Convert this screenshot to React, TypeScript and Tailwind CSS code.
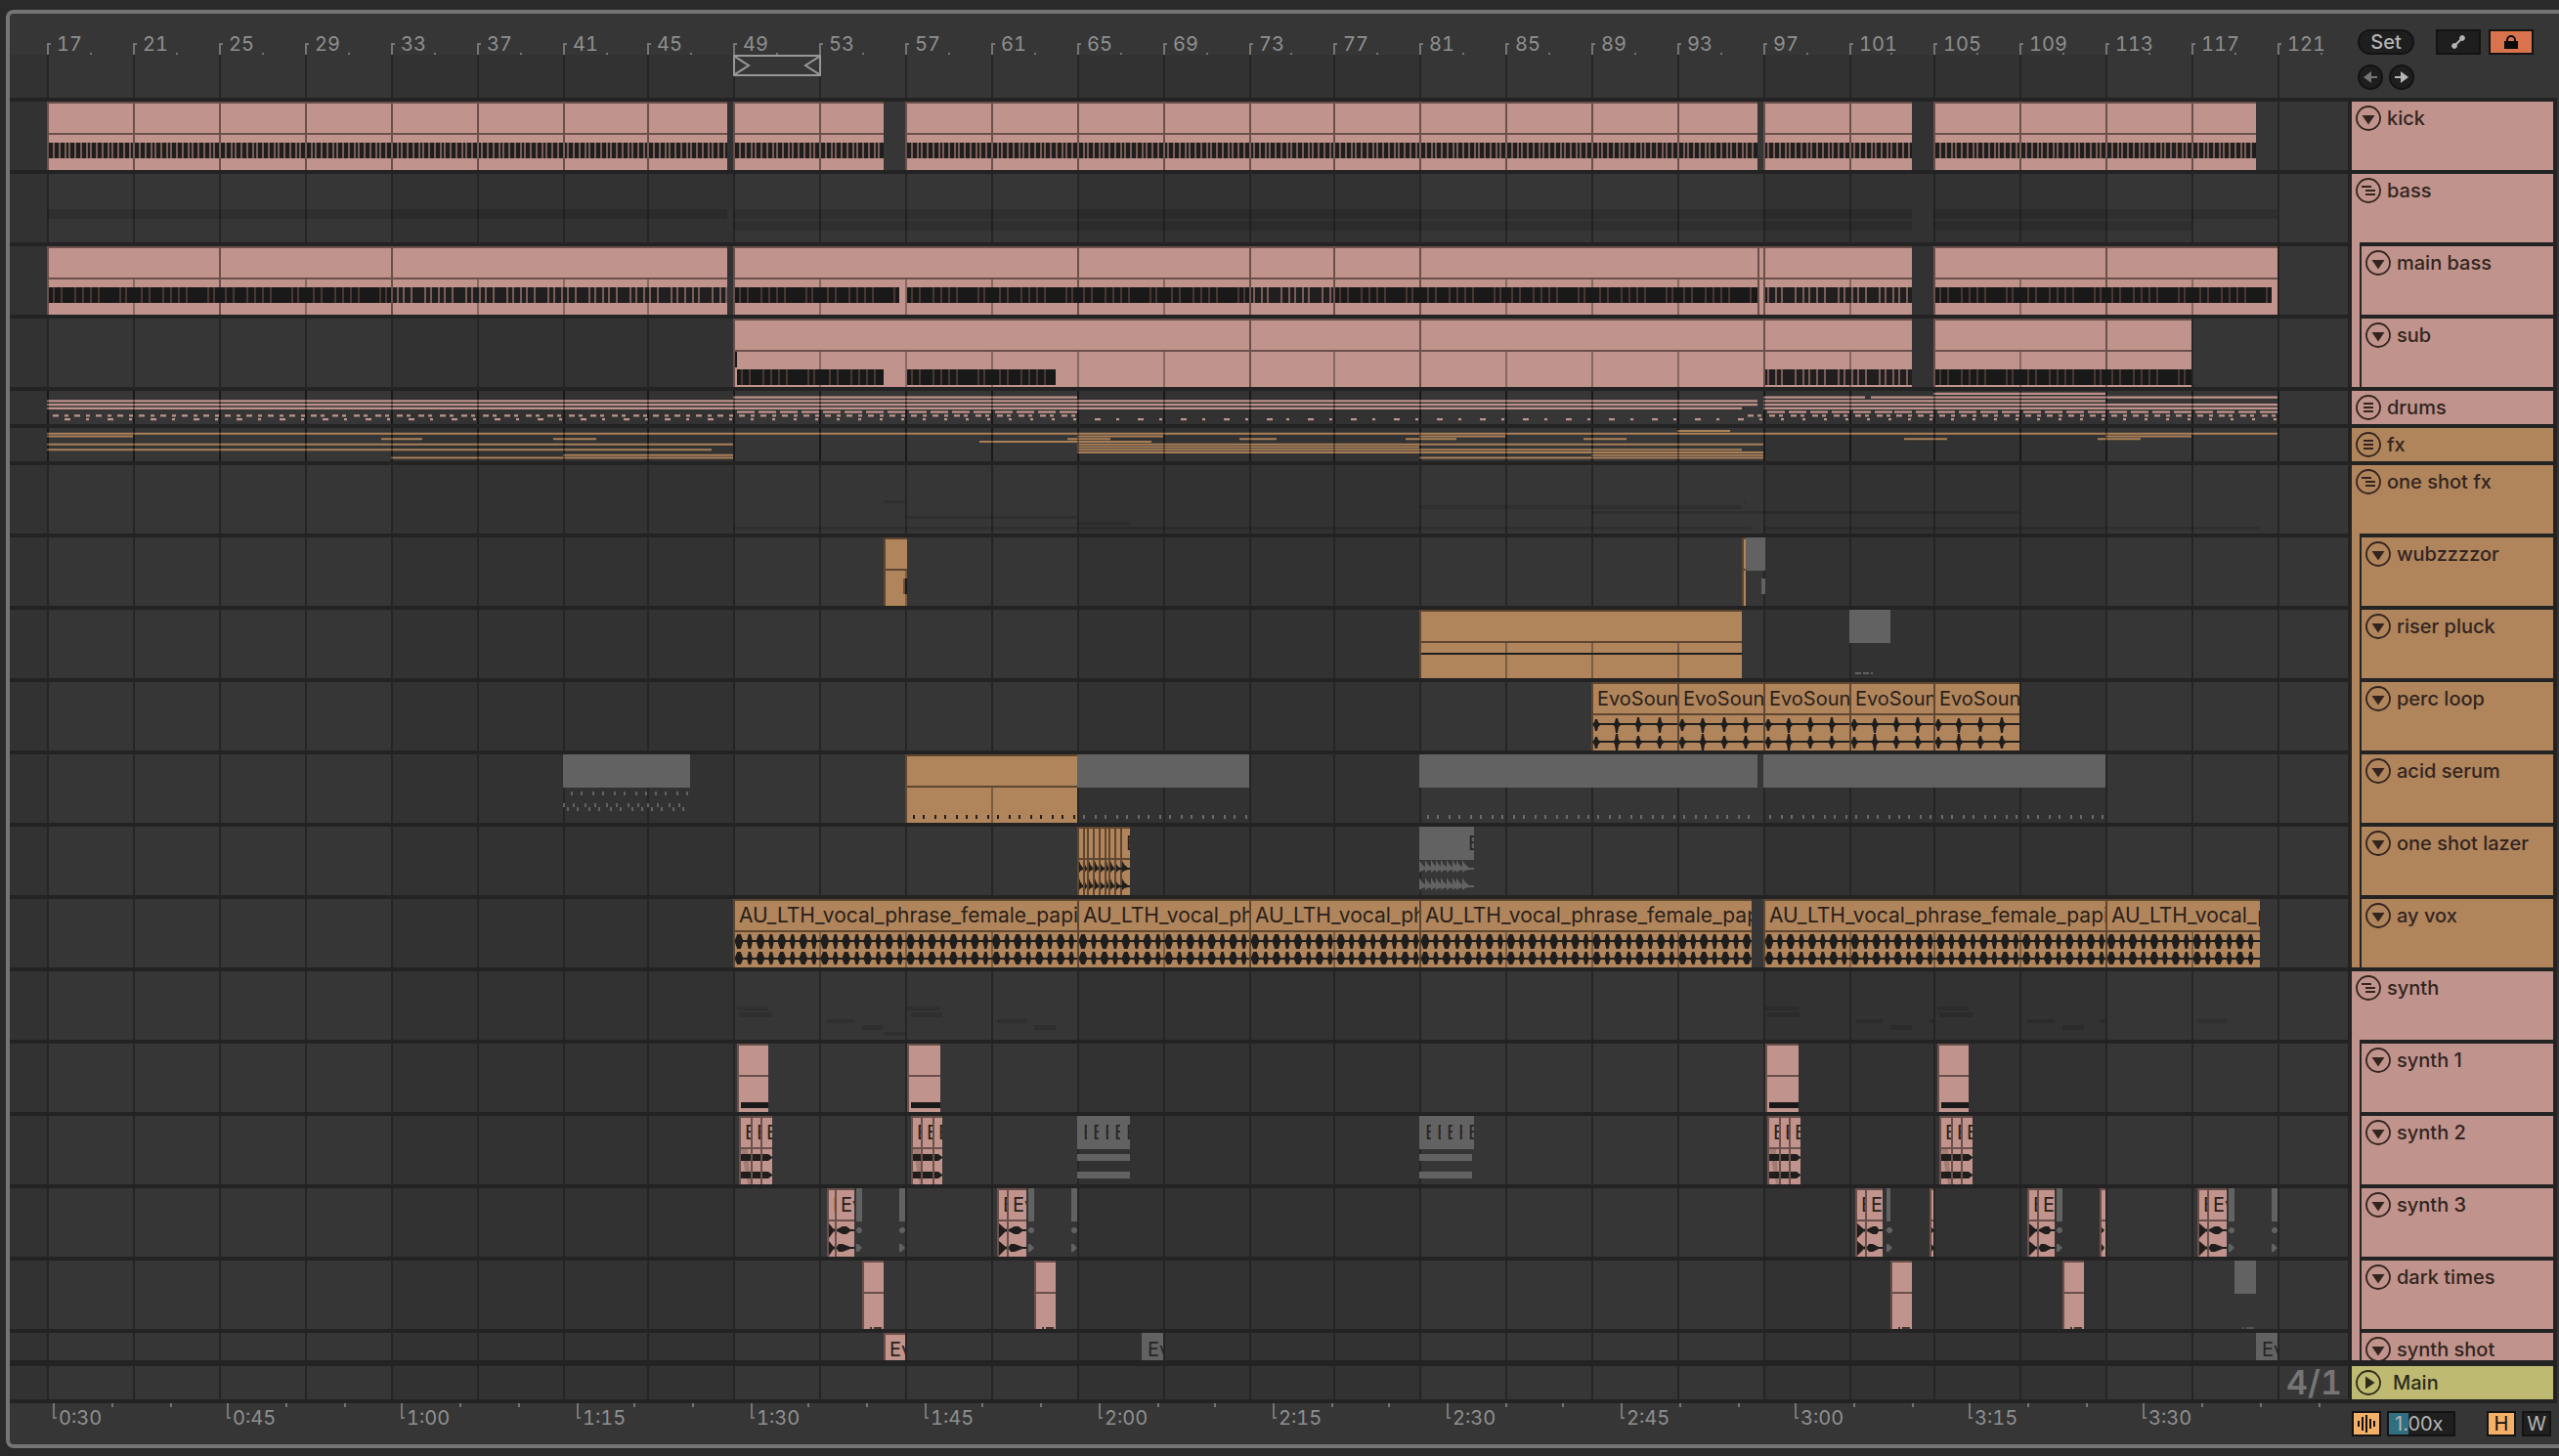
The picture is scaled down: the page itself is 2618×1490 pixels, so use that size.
import React from 'react';

type Clip = {
  from: number;
  to: number;
  label?: string;
  muted?: boolean;
  wide?: boolean;
};

type Shape = { d: string; fill: string };

type Track = {
  id: string;
  color: 'pink' | 'orange';
  clips?: Clip[];
  shapes?: Shape[];
  overlayGrid?: boolean;
  height?: string;
};

const LANE_W = 2392;
const DARK = '#1f1e1d';
const MUTED = '#626262';
const GHOST = 'rgba(0,0,0,0.13)';
const STRIPE = '#7a5d58';
const STRIPE_DARK = '#4a3733';

const barX = (bar: number) => 2 * Math.ceil(18.92 + (bar - 17) * 10.966);
const pct = (x: number) => `${(x / LANE_W) * 100}%`;

const rect = (x: number, y: number, w: number, h: number) => `M${x} ${y}h${w}v${h}h${-w}z`;
const span = (from: number, to: number, y: number, h: number) =>
  rect(barX(from), y, barX(to) - barX(from), h);

const range = (from: number, to: number, step: number) => {
  const out: number[] = [];
  for (let v = from; v < to - 0.001; v += step) out.push(v);
  return out;
};

const cuts = (points: number[], label?: string, muted?: boolean): Clip[] =>
  points.slice(0, -1).map((from, i) => ({ from, to: points[i + 1], label, muted }));

const gridBars = range(17, 122, 4);

/* ---------- notes and wave forms ---------- */

const beatBand = (from: number, to: number, y: number): Shape[] => [
  { d: rect(barX(from) + 2, y, barX(to) - barX(from) - 2, 16), fill: DARK },
  { d: range(from + 0.25, to, 0.25).map((b) => rect(barX(b), y, 2, 16)).join(''), fill: STRIPE },
];

const phraseOffsets = [6, 14, 28, 36, 44, 52, 74, 80];

const phraseBand = (from: number, to: number, y: number): Shape[] => {
  const end = barX(to);
  const stripes = range(from, to, 4).flatMap((b, i) =>
    phraseOffsets.map((o) => barX(b) + o + (i % 2 ? 2 : 0)).filter((x) => x < end - 2),
  );
  return [
    { d: rect(barX(from) + 2, y, end - barX(from) - 2, 16), fill: '#191919' },
    { d: stripes.map((x) => rect(x, y, 2, 16)).join(''), fill: STRIPE_DARK },
  ];
};

const looseBand = (from: number, to: number, y: number): Shape[] => [
  { d: rect(barX(from) + 2, y, barX(to) - barX(from) - 2, 16), fill: '#201e1e' },
  {
    d: range(from + 0.25, to, 0.32).filter((_, i) => i % 6 !== 3).map((b) => rect(barX(b), y, 2, 16)).join(''),
    fill: STRIPE,
  },
];

const blob = (cx: number, cy: number, w: number, up: number, down: number) =>
  `M${cx - w / 2} ${cy}L${cx - w / 5} ${cy - up}H${cx + w / 5}L${cx + w / 2} ${cy}L${cx + w / 5} ${cy + down}H${cx - w / 5}z`;

const voxWave = (from: number, to: number): Shape => {
  const x0 = barX(from) + 2;
  const x1 = barX(to);
  let d = rect(x0, 42, x1 - x0, 2) + rect(x0, 60, x1 - x0, 2);
  for (let i = 0; x0 + 4 + i * 10.97 < x1 - 2; i++) {
    const cx = x0 + 4 + i * 10.97;
    const w = i % 2 ? 6 : 9;
    d += blob(cx, 43, w, 7, 8) + blob(cx, 61, w, 7, 6);
  }
  return { d, fill: DARK };
};

const percWave = (from: number): Shape => {
  const x0 = barX(from);
  const x1 = barX(from + 4);
  const peak = (x: number, c: number, up: number, down: number) =>
    `M${x - 4} ${c}L${x - 2} ${c - 2}L${x - 1} ${c - up}H${x + 1}L${x + 2} ${c - 2}L${x + 5} ${c}L${x + 2} ${c + 3}L${x + 1} ${c + down}H${x - 1}L${x - 2} ${c + 3}z`;
  const d =
    rect(x0 + 2, 42, x1 - x0 - 2, 2) +
    rect(x0 + 2, 60, x1 - x0 - 2, 2) +
    peak(x0 + 5, 43, 5, 7) + peak(x0 + 26, 43, 6, 9) + peak(x0 + 48, 43, 7, 8) + peak(x0 + 70, 43, 7, 9) +
    peak(x0 + 5, 61, 5, 7) + peak(x0 + 26, 61, 8, 9) + peak(x0 + 48, 61, 6, 7) + peak(x0 + 70, 61, 6, 7);
  return { d, fill: DARK };
};

const lazerStarts = [65, 65.29, 65.47, 65.75, 66.02, 66.29, 66.47, 66.75, 67.02];

const decay = (x: number, c: number, w: number, up: number, down: number) =>
  `M${x} ${c - up}L${x + w * 0.4} ${c - up / 2}L${x + w} ${c - 1}V${c + 1}L${x + w * 0.4} ${c + down / 2}L${x} ${c + down}z`;

const lazerWave = (): Shape => {
  const d = lazerStarts
    .map((b, i) => {
      const x = barX(b) + 2;
      const w = Math.min(barX(lazerStarts[i + 1] ?? 67.48) - x, 6);
      const up = i % 3 === 1 ? 5 : 8;
      return decay(x, 43, w, up, 4) + decay(x, 61, w, up, 4);
    })
    .join('');
  return { d: d + span(67.02, 67.48, 42, 2) + span(67.02, 67.48, 60, 2), fill: DARK };
};

const mutedLazer = (): Shape => {
  const x0 = barX(81);
  const d = [0, 6, 12, 17, 22, 28, 34, 38, 44]
    .map((o) => decay(x0 + o, 43, 7, 9, 4) + decay(x0 + o, 61, 7, 9, 4))
    .join('');
  return { d: d + rect(x0, 42, 56, 2) + rect(x0, 60, 56, 2), fill: MUTED };
};

const acidDots = (from: number, to: number, fill: string): Shape => ({
  d: range(from + 0.32, to, 0.5).map((b) => rect(barX(b), 62, 2, 4)).join(''),
  fill,
});

const acidArp: Shape = {
  d: range(41, 47, 1)
    .map((b) => {
      const x = barX(b);
      return [
        rect(x + 8, 38, 2, 4), rect(x + 18, 38, 2, 4),
        rect(x, 50, 2, 4), rect(x + 10, 50, 2, 4),
        rect(x + 4, 54, 2, 4), rect(x + 14, 54, 2, 4),
      ].join('');
    })
    .join(''),
  fill: MUTED,
};

const chordWave = (from: number, to: number): Shape[] => {
  const x0 = barX(from) + 2;
  const x1 = barX(to);
  const row = (y: number) => `M${x0} ${y}H${x1 - 4}L${x1} ${y + 3}V${y + 4}L${x1 - 4} ${y + 7}H${x0}z`;
  return [
    { d: `M${x0} 34h7L${x0 + 10} 70H${x0 + 7}z`, fill: 'rgba(0,0,0,0.16)' },
    { d: row(39) + row(57), fill: DARK },
  ];
};

const mutedChords = (from: number): Shape => ({
  d: span(from, from + 2.48, 39, 7) + span(from, from + 2.48, 57, 7),
  fill: MUTED,
});

const stabWave = (a: number, b: number, c: number): Shape => {
  const x0 = barX(a) + 2;
  const x1 = barX(b) + 2;
  const x2 = barX(c);
  const tri = (y: number) => `M${x0} ${y - 7}L${x1 - 3} ${y - 1}L${x1 - 2} ${y - 2}V${y + 2}L${x1 - 3} ${y + 1}L${x0} ${y + 8}z`;
  const lens = (y: number, p: number) =>
    `M${x1} ${y - 1}L${x1 + p - 2} ${y - 4}H${x1 + p + 2}L${x2 - 4} ${y - 1}H${x2}V${y + 1}H${x2 - 4}L${x1 + p + 2} ${y + 4}H${x1 + p - 2}L${x1} ${y + 1}z`;
  return { d: tri(43) + tri(61) + lens(43, 8) + lens(61, 4), fill: DARK };
};

const mutedTail = (from: number): Shape => {
  const x = barX(from);
  return {
    d: `M${x} 42l2 -2h2l2 2v2l-2 2h-2l-2 -2zM${x} 57h2l4 4l-4 4h-2z`,
    fill: MUTED,
  };
};

const sliverWave = (from: number): Shape => {
  const x = barX(from) + 2;
  return { d: `M${x} 40l3 3l-3 3zM${x} 57l3 4l-3 4z`, fill: DARK };
};

const tinyNotes = (from: number, fill: string): Shape => {
  const x = barX(from);
  return { d: rect(x + 8, 68, 2, 2) + rect(x + 12, 68, 8, 2), fill };
};

/* ---------- folded group overviews ---------- */

const PINK = '#bf938b';
const ORANGE = '#a97f58';

const drumsOverview = (): Shape[] => {
  const y = (k: number) => 1.7 + 3.75 * k;
  const solid = [
    [0, 105, 113], [1, 49, 65], [1, 97, 101.8], [1, 102, 121], [2, 17, 96.75], [2, 97, 113],
    [3, 17, 96.75], [3, 97, 121], [4, 17, 96], [4, 97, 121],
  ].map(([k, a, b]) => span(a, b, y(k), 2.4)).join('');
  const bars = [...range(49, 65, 1), ...range(97, 121, 1)]
    .map((b) => rect(barX(b) + 4, y(5), 18, 2.4)).join('');
  const halves = [...range(17, 65, 0.5), ...range(96, 121, 0.5)]
    .map((b, i) => rect(barX(b) + 6, y(6), i % 2 ? 4 : 6, 2.4)).join('');
  const hits = [...range(17, 49, 1), ...range(65, 97, 1)]
    .map((b, i) => rect(barX(b) + 18, y(7), i % 2 ? 3 : 6, 2.4)).join('');
  const short = [...range(49, 65, 1), ...range(97, 121, 1)]
    .map((b) => rect(barX(b) + 18, y(7), 3, 2.4)).join('');
  return [{ d: solid + bars + halves + hits + short, fill: PINK }];
};

const fxOverview = (): Shape[] => {
  const d = [
    [0, 93, 95.5], [1, 17, 121], [2, 17, 21], [2, 65, 69], [2, 81, 85], [2, 113, 117],
    [3, 32.6, 34.5], [3, 40.6, 42.6], [3, 64.6, 66.6], [3, 72.6, 74.3], [3, 80.3, 82.7],
    [3, 88.6, 90.6], [3, 103.6, 105.6], [3, 112.6, 114.6], [4, 60.5, 68.5],
    [5, 17, 49], [5, 65, 97], [6, 65, 81], [7, 17, 48], [7, 65, 81], [7, 81, 96],
    [8, 65, 97], [9, 41, 49], [9, 89, 97], [10, 33, 49], [10, 81, 97],
  ].map(([k, a, b]) => span(a, b, 2 + 2.75 * k, 2)).join('');
  return [{ d, fill: ORANGE }];
};

/* ---------- arrangement data ---------- */

const voxPoints = [[49, 65, 73, 81, 96.5], [97, 113, 120.2]];
const voxLabel = 'AU_LTH_vocal_phrase_female_papi';
const chordCuts = [
  [49.24, 49.8, 50.25, 50.8],
  [57.27, 57.7, 58.27, 58.72],
  [97.2, 97.75, 98.2, 98.75],
  [105.25, 105.8, 106.25, 106.8],
];
const stabCuts = [
  [53.35, 53.7, 54.63],
  [61.28, 61.74, 62.65],
  [101.3, 101.76, 102.6],
  [109.34, 109.8, 110.6],
  [117.27, 117.72, 118.63],
];
const mutedStabs = [[54.72, 55], [56.72, 57], [62.74, 63], [64.74, 65], [102.77, 102.95], [110.7, 111], [118.74, 119], [120.75, 121]];
const leadClips = [[49.15, 50.6], [57.08, 58.63], [97.12, 98.65], [105.15, 106.6]];
const darkClips = [[55, 56], [63, 64], [103, 104], [111, 112]];

const synthGhosts = [
  ...leadClips.map(([a, b]) => span(a, b, 36, 4)),
  ...chordCuts.map((c) => span(c[0], c[3], 42, 5)),
  ...stabCuts.map((c) => span(c[0], c[2], 49, 4)),
  span(104.77, 105, 49, 4),
  span(112.7, 113, 49, 4),
  ...darkClips.map(([a, b]) => span(a, b, 55, 5)),
  span(56, 57, 62, 4),
].join('');

const tracks: Track[] = [
  {
    id: 'kick',
    color: 'pink',
    clips: [
      ...cuts([...range(17, 48, 4), 48.74]),
      ...cuts([49, 53, 56]),
      ...cuts([...range(57, 96, 4), 96.75]),
      ...cuts([97, 101, 104]),
      ...cuts([105, 109, 113, 117, 120]),
    ],
    shapes: [
      ...beatBand(17, 48.74, 42), ...beatBand(49, 56, 42), ...beatBand(57, 96.75, 42),
      ...beatBand(97, 104, 42), ...beatBand(105, 120, 42),
    ],
  },
  {
    id: 'bass',
    color: 'pink',
    shapes: [
      {
        d: span(17, 48.74, 36, 10) + span(49, 104, 36, 10) + span(105, 121, 36, 10) +
          span(49, 104, 48, 10) + span(105, 117, 48, 10),
        fill: GHOST,
      },
    ],
  },
  {
    id: 'main bass',
    color: 'pink',
    clips: [
      ...cuts([17, 25, 33, 48.74]),
      ...cuts([49, 65, 73, 77, 81, 96.75, 97, 104]),
      ...cuts([105, 113, 121]),
    ],
    shapes: [
      ...phraseBand(17, 33, 42), ...looseBand(33, 48.74, 42), ...phraseBand(49, 56.7, 42),
      ...phraseBand(57, 73, 42), ...looseBand(73, 77, 42), ...phraseBand(77, 96.75, 42),
      ...looseBand(97, 104, 42), ...phraseBand(105, 120.7, 42),
    ],
  },
  {
    id: 'sub',
    color: 'pink',
    clips: [...cuts([49, 73, 81, 97, 104]), ...cuts([105, 113, 117])],
    shapes: [
      { d: rect(barX(49) + 2, 34, 2, 16), fill: '#191919' },
      ...phraseBand(49.1, 56, 52), ...phraseBand(57, 64, 52),
      ...looseBand(97, 104, 52), ...phraseBand(105, 117, 52),
    ],
  },
  { id: 'drums', color: 'pink', height: 'h-[34px]', shapes: drumsOverview(), overlayGrid: true },
  { id: 'fx', color: 'orange', height: 'h-[34px]', shapes: fxOverview(), overlayGrid: true },
  {
    id: 'one shot fx',
    color: 'orange',
    shapes: [
      {
        d: span(56, 57, 36, 3) + span(96.1, 96.25, 36, 3) + span(81, 96, 41, 4) + span(89, 109, 47, 3) +
          span(57, 65, 52, 3) + span(65, 67.48, 58, 3) + span(49, 96.5, 63, 3) + span(97, 120.2, 63, 3),
        fill: GHOST,
      },
    ],
  },
  {
    id: 'wubzzzzor',
    color: 'orange',
    clips: [{ from: 56, to: 57.1 }, { from: 96.05, to: 96.2 }, { from: 96.2, to: 97.1, muted: true }],
    shapes: [
      { d: rect(barX(57.1) - 2, 42, 2, 16), fill: '#191919' },
      { d: rect(barX(57.1) - 4, 42, 2, 16), fill: '#6b5038' },
      { d: rect(barX(97.1) - 4, 42, 4, 16), fill: MUTED },
    ],
  },
  {
    id: 'riser pluck',
    color: 'orange',
    clips: [{ from: 81, to: 96 }, { from: 101, to: 103, muted: true }],
    shapes: [
      { d: rect(barX(81) + 2, 44, barX(96) - barX(81) - 2, 2), fill: DARK },
      { d: rect(barX(101) + 6, 64, 6, 2) + rect(barX(101) + 14, 64, 6, 2) + rect(barX(101) + 22, 64, 2, 2), fill: MUTED },
    ],
  },
  {
    id: 'perc loop',
    color: 'orange',
    clips: cuts([89, 93, 97, 101, 105, 109], 'EvoSoun'),
    shapes: [89, 93, 97, 101, 105].map(percWave),
  },
  {
    id: 'acid serum',
    color: 'orange',
    clips: [
      { from: 41, to: 47, muted: true },
      { from: 57, to: 65 },
      { from: 65, to: 73, muted: true },
      { from: 81, to: 96.75, muted: true },
      { from: 97, to: 113, muted: true },
    ],
    shapes: [
      acidArp, acidDots(57, 65, DARK), acidDots(65, 73, '#6a6a6a'),
      acidDots(81, 96.5, '#6a6a6a'), acidDots(97, 113, '#6a6a6a'),
    ],
  },
  {
    id: 'one shot lazer',
    color: 'orange',
    clips: [
      ...cuts(lazerStarts),
      { from: 67.02, to: 67.48, label: 'E' },
      { from: 81, to: 82.98, muted: true },
      { from: 82.98, to: 83.5, muted: true, label: 'E' },
    ],
    shapes: [lazerWave(), mutedLazer()],
  },
  {
    id: 'ay vox',
    color: 'orange',
    clips: voxPoints.flatMap((p) => cuts(p, voxLabel).map((c) => ({ ...c, wide: true }))),
    shapes: voxPoints.flatMap((p) => p.slice(0, -1).map((from, i) => voxWave(from, p[i + 1]))),
  },
  { id: 'synth', color: 'pink', shapes: [{ d: synthGhosts, fill: GHOST }] },
  {
    id: 'synth 1',
    color: 'pink',
    clips: leadClips.map(([from, to]) => ({ from, to })),
    shapes: leadClips.map(([a, b]) => ({
      d: rect(barX(a) + 4, 60, barX(b) - barX(a) - 4, 6),
      fill: '#191919',
    })),
  },
  {
    id: 'synth 2',
    color: 'pink',
    clips: [
      ...chordCuts.flatMap((c) => cuts(c, 'E')),
      ...cuts([65, 65.47, 66.02, 66.47, 67.02, 67.48], 'E', true),
      ...cuts([81, 81.5, 81.98, 82.53, 82.98, 83.5], 'E', true),
    ],
    shapes: [
      ...chordCuts.flatMap((c) => chordWave(c[0], c[3])),
      { d: chordCuts.flatMap((c) => [rect(barX(c[1]), 34, 2, 36), rect(barX(c[2]), 34, 2, 36)]).join(''), fill: '#6b4f4b' },
      mutedChords(65),
      mutedChords(81),
    ],
  },
  {
    id: 'synth 3',
    color: 'pink',
    clips: [
      ...stabCuts.flatMap((c) => [
        { from: c[0], to: c[1], label: 'E' },
        { from: c[1], to: c[2], label: 'Ev' },
      ]),
      ...mutedStabs.map(([from, to]) => ({ from, to, muted: true })),
      { from: 104.77, to: 104.97 },
      { from: 112.7, to: 113 },
    ],
    shapes: [
      ...stabCuts.map(([a, b, c]) => stabWave(a, b, c)),
      ...mutedStabs.map(([a]) => mutedTail(a)),
      sliverWave(104.77),
      sliverWave(112.7),
    ],
  },
  {
    id: 'dark times',
    color: 'pink',
    clips: [...darkClips.map(([from, to]) => ({ from, to })), { from: 119, to: 120, muted: true }],
    shapes: [...darkClips.map(([a]) => tinyNotes(a, '#463735')), tinyNotes(119, '#555555')],
  },
  {
    id: 'synth shot',
    color: 'pink',
    height: 'h-7',
    clips: [
      { from: 56, to: 57, label: 'Ev' },
      { from: 68, to: 69, label: 'Ev', muted: true },
      { from: 120, to: 121, label: 'Ev', muted: true },
    ],
  },
];

/* ---------- lanes ---------- */

const ClipBox = ({ clip, color }: { clip: Clip; color: Track['color'] }) => {
  const x = barX(clip.from);
  const w = barX(clip.to) - x;
  const style = { left: pct(x), width: pct(w) };

  if (clip.muted) {
    return (
      <div className="absolute top-0 h-[34px] overflow-hidden bg-[#626262]" style={style}>
        <div className="pl-1.5 pt-0.5 text-xl leading-[30px] text-[#262626]">{clip.label}</div>
      </div>
    );
  }

  const edge = color === 'pink' ? 'border-[#6b4f4b]' : 'border-[#5f4630]';
  const fill = color === 'pink' ? 'bg-[#c0948c]' : 'bg-[#b0855c]';
  const size = clip.wide ? 'text-[21px]' : 'text-xl';
  const inner = gridBars.filter((b) => b > clip.from && b < clip.to);

  return (
    <div className={`absolute inset-y-0 overflow-hidden border-l-2 border-t-2 ${edge} ${fill}`} style={style}>
      <div className={`h-8 whitespace-nowrap border-b-2 pl-1 ${size} leading-[30px] text-[#2a2019] ${edge}`}>
        {clip.label}
      </div>
      {inner.map((b) => (
        <div
          key={b}
          className="absolute bottom-0 top-8 w-0.5 bg-black/30"
          style={{ left: `${((barX(b) - x - 2) / (w - 2)) * 100}%` }}
        />
      ))}
    </div>
  );
};

const Lane = ({ track }: { track: Track }) => {
  const h = track.height === 'h-[34px]' ? 34 : 70;
  return (
    <div className={`relative box-content overflow-hidden border-t-4 border-[#232323] ${track.height ?? 'h-[70px]'}`}>
      {track.clips?.map((clip) => (
        <ClipBox key={clip.from} clip={clip} color={track.color} />
      ))}
      {track.shapes && (
        <svg
          className="pointer-events-none absolute inset-0 size-full"
          viewBox={`0 0 ${LANE_W} ${h}`}
          preserveAspectRatio="none"
          aria-hidden="true"
        >
          {track.shapes.map((s, i) => (
            <path key={i} d={s.d} fill={s.fill} />
          ))}
          {track.overlayGrid && (
            <path d={gridBars.map((b) => rect(barX(b), 0, 2, h)).join('')} fill="rgba(0,0,0,0.3)" />
          )}
        </svg>
      )}
    </div>
  );
};

const Grid = () => (
  <div className="absolute inset-x-0 bottom-[42px] top-[42px]">
    {[[-10, 17], [33, 49], [65, 81], [97, 113]].map(([a, b]) => {
      const x = Math.max(0, barX(a));
      return (
        <div
          key={a}
          className="absolute inset-y-0 bg-[#323232]"
          style={{ left: pct(x), width: pct(barX(b) - x) }}
        />
      );
    })}
    {gridBars.map((b) => (
      <div key={b} className="absolute inset-y-0 w-0.5 bg-[#252525]" style={{ left: pct(barX(b)) }} />
    ))}
  </div>
);

const BarRuler = () => (
  <div className="relative h-[86px]">
    {gridBars.map((b) => (
      <React.Fragment key={b}>
        <div className="absolute top-[30px] h-3 w-1 border-l-2 border-t-2 border-[#757575]" style={{ left: pct(barX(b)) }} />
        <span className="absolute top-[21px] pl-2.5 text-xl leading-5 tabular-nums text-[#8f8f8f]" style={{ left: pct(barX(b)) }}>
          {b}
        </span>
        <div className="absolute top-10 size-0.5 bg-[#757575]" style={{ left: pct(barX(b + 2)) }} />
      </React.Fragment>
    ))}
    <div
      className="absolute top-[42px] flex h-[22px] justify-between border-2 border-[#979797]"
      style={{ left: pct(barX(49)), width: pct(barX(53) - barX(49) + 2) }}
    >
      <svg className="h-full w-4" viewBox="0 0 16 18" fill="none" stroke="#979797" strokeWidth="2" aria-hidden="true">
        <path d="M0 0L14 9L0 18" />
      </svg>
      <svg className="h-full w-4" viewBox="0 0 16 18" fill="none" stroke="#979797" strokeWidth="2" aria-hidden="true">
        <path d="M16 0L2 9L16 18" />
      </svg>
    </div>
  </div>
);

const timeX = (seconds: number) => 2 * Math.round((44.4 + (seconds - 30) * 11.88) / 2);

const TimeRuler = () => (
  <div className="relative h-[42px] overflow-hidden">
    {range(30, 226, 5).map((s) => {
      const left = pct(timeX(s));
      if (s % 15 !== 0 || s === 225) {
        return <div key={s} className="absolute top-0 h-1 w-0.5 bg-[#757575]" style={{ left }} />;
      }
      return (
        <React.Fragment key={s}>
          <div className="absolute top-0 h-4 w-1 border-b-2 border-l-2 border-[#757575]" style={{ left }} />
          <span className="absolute top-[5px] pl-1.5 text-xl leading-5 tabular-nums text-[#8f8f8f]" style={{ left }}>
            {Math.floor(s / 60)}:{String(s % 60).padStart(2, '0')}
          </span>
        </React.Fragment>
      );
    })}
  </div>
);

/* ---------- track headers ---------- */

const icons = {
  track: <path d="M6.5 10h13L13 19.5z" fill="currentColor" />,
  open: <path d="M6 9h10M10 13h10M10 17h10" stroke="currentColor" strokeWidth="2" />,
  folded: <path d="M8 9h10M8 13h10M8 17h10" stroke="currentColor" strokeWidth="2" />,
  main: <path d="M10 6.5v13L19.5 13z" fill="currentColor" />,
};

const FoldButton = ({ kind, name }: { kind: keyof typeof icons; name: string }) => (
  <button type="button" aria-label={`Fold ${name}`} className="size-[26px] shrink-0">
    <svg viewBox="0 0 26 26" fill="none" aria-hidden="true">
      <circle cx="13" cy="13" r="12" stroke="currentColor" strokeWidth="1.8" />
      {icons[kind]}
    </svg>
  </button>
);

type HeaderProps = { name: string; kind?: keyof typeof icons; className?: string };

const TrackHeader = ({ name, kind = 'track', className = 'h-[70px] bg-[#c0948c]' }: HeaderProps) => (
  <div className={`flex items-start gap-1.5 overflow-hidden pl-1 pt-1 text-[#33241f] ${className}`}>
    <FoldButton kind={kind} name={name} />
    <span className="whitespace-nowrap text-xl font-medium leading-[26px]">{name}</span>
  </div>
);

type GroupProps = { name: string; fill: string; tracks: string[]; last?: string };

const GroupHeader = ({ name, fill, tracks: children, last }: GroupProps) => (
  <div className={fill}>
    <TrackHeader name={name} kind="open" className={`h-[70px] ${fill}`} />
    <div className="ml-2 flex flex-col gap-1 border-l-2 border-[#232323] bg-[#232323] pt-1">
      {children.map((t) => (
        <TrackHeader key={t} name={t} className={`${t === last ? 'h-7' : 'h-[70px]'} ${fill}`} />
      ))}
    </div>
  </div>
);

const Toolbar = () => (
  <div className="flex h-[86px] flex-col gap-2.5 pl-2.5 pt-4">
    <div className="flex items-center">
      <button type="button" className="h-[26px] w-[58px] rounded-full border-2 border-[#131313] bg-[#1e1e1e] text-xl font-medium leading-5 text-[#b5b5b5]">
        Set
      </button>
      <button type="button" aria-label="Automation mode" className="ml-[22px] flex h-[26px] w-[46px] items-center justify-center border-2 border-[#131313] bg-[#1e1e1e]">
        <svg className="h-[14px] w-[14px]" viewBox="0 0 14 14" fill="#b5b5b5" stroke="#b5b5b5" aria-hidden="true">
          <path d="M3 11L11 3" strokeWidth="2" />
          <circle cx="3" cy="11" r="2.4" />
          <circle cx="11" cy="3" r="2.4" />
        </svg>
      </button>
      <button type="button" aria-label="Lock envelopes" className="ml-2 flex h-[26px] w-[46px] items-center justify-center border-2 border-[#131313] bg-[#d9734e]">
        <svg className="h-[14px] w-[14px]" viewBox="0 0 14 14" aria-hidden="true">
          <path d="M3 7V5a4 4 0 0 1 8 0v2" fill="none" stroke="#0b0b0b" strokeWidth="2" />
          <path d="M0 6h14v8H0z" fill="#0b0b0b" />
        </svg>
      </button>
    </div>
    <div className="flex gap-1.5">
      <button type="button" aria-label="Previous locator" className="flex size-[26px] items-center justify-center rounded-full border-2 border-[#131313] bg-[#1e1e1e]">
        <svg className="h-3 w-[14px] shrink-0" viewBox="0 0 14 12" fill="#757575" aria-hidden="true">
          <path d="M0 6L8 0V5H14V7H8V12z" />
        </svg>
      </button>
      <button type="button" aria-label="Next locator" className="flex size-[26px] items-center justify-center rounded-full border-2 border-[#131313] bg-[#1e1e1e]">
        <svg className="h-3 w-[14px] shrink-0" viewBox="0 0 14 12" fill="#b5b5b5" aria-hidden="true">
          <path d="M14 6L6 0V5H0V7H6V12z" />
        </svg>
      </button>
    </div>
  </div>
);

const BottomControls = () => (
  <div className="flex h-[42px] items-start pl-1 pr-2 pt-2">
    <button type="button" aria-label="Fit to waveform" className="flex h-[26px] w-[30px] items-center justify-center border-2 border-[#131313] bg-[#f4b067]">
      <svg className="h-[18px] w-[18px]" viewBox="0 0 18 18" stroke="#131313" strokeWidth="2" aria-hidden="true">
        <path d="M1 6v6M5 2v14M9 0v18M13 4v10M17 6v6" />
      </svg>
    </button>
    <input
      aria-label="Zoom factor"
      defaultValue="1.00x"
      className="ml-1.5 h-[26px] w-[70px] rounded-none border-2 border-[#131313] bg-[linear-gradient(to_right,#2f6f80_20px,#1f1f1f_20px)] pl-1.5 text-xl leading-5 text-[#b5b5b5]"
    />
    <button type="button" className="ml-auto h-[26px] w-[30px] border-2 border-[#131313] bg-[#f4b067] text-xl leading-5 text-[#131313]">
      H
    </button>
    <button type="button" className="ml-1.5 h-[26px] w-[30px] border-2 border-[#131313] bg-[#1f1f1f] text-xl leading-5 text-[#b5b5b5]">
      W
    </button>
  </div>
);

const App = () => {
  return (
    <div className="min-h-screen overflow-hidden bg-[#2a2a2a] pb-2 pl-1.5 pt-2.5 font-['Inter',sans-serif]">
      <div className="flex rounded-l-lg border-4 border-r-0 border-[#757575] bg-[#363636]">
        {/* Timeline */}
        <main className="relative min-w-0 flex-1 overflow-hidden">
          <Grid />
          <BarRuler />
          {tracks.map((track) => (
            <Lane key={track.id} track={track} />
          ))}
          <div className="relative box-content flex h-[34px] items-center justify-end border-b-4 border-t-6 border-[#232323] pr-1.5">
            <span className="text-[34px] font-semibold leading-[34px] tabular-nums text-[#757575]">4/1</span>
          </div>
          <TimeRuler />
        </main>

        {/* Track headers */}
        <aside className="flex w-[216px] shrink-0 flex-col">
          <Toolbar />
          <div className="mr-0.5 flex flex-col gap-1 bg-[#232323] px-1 py-1">
            <TrackHeader name="kick" />
            <GroupHeader name="bass" fill="bg-[#c0948c]" tracks={['main bass', 'sub']} />
            <TrackHeader name="drums" kind="folded" className="h-[34px] bg-[#c0948c]" />
            <TrackHeader name="fx" kind="folded" className="h-[34px] bg-[#b0855c]" />
            <GroupHeader
              name="one shot fx"
              fill="bg-[#b0855c]"
              tracks={['wubzzzzor', 'riser pluck', 'perc loop', 'acid serum', 'one shot lazer', 'ay vox']}
            />
            <GroupHeader
              name="synth"
              fill="bg-[#c0948c]"
              tracks={['synth 1', 'synth 2', 'synth 3', 'dark times', 'synth shot']}
              last="synth shot"
            />
            <div className="mt-0.5 flex h-[34px] items-start gap-3 bg-[#bfba72] pl-1 pt-1 text-[#2d2c1b]">
              <FoldButton kind="main" name="Main" />
              <span className="text-xl font-medium leading-[26px]">Main</span>
            </div>
          </div>
          <BottomControls />
        </aside>
      </div>
    </div>
  );
};

export default App;
